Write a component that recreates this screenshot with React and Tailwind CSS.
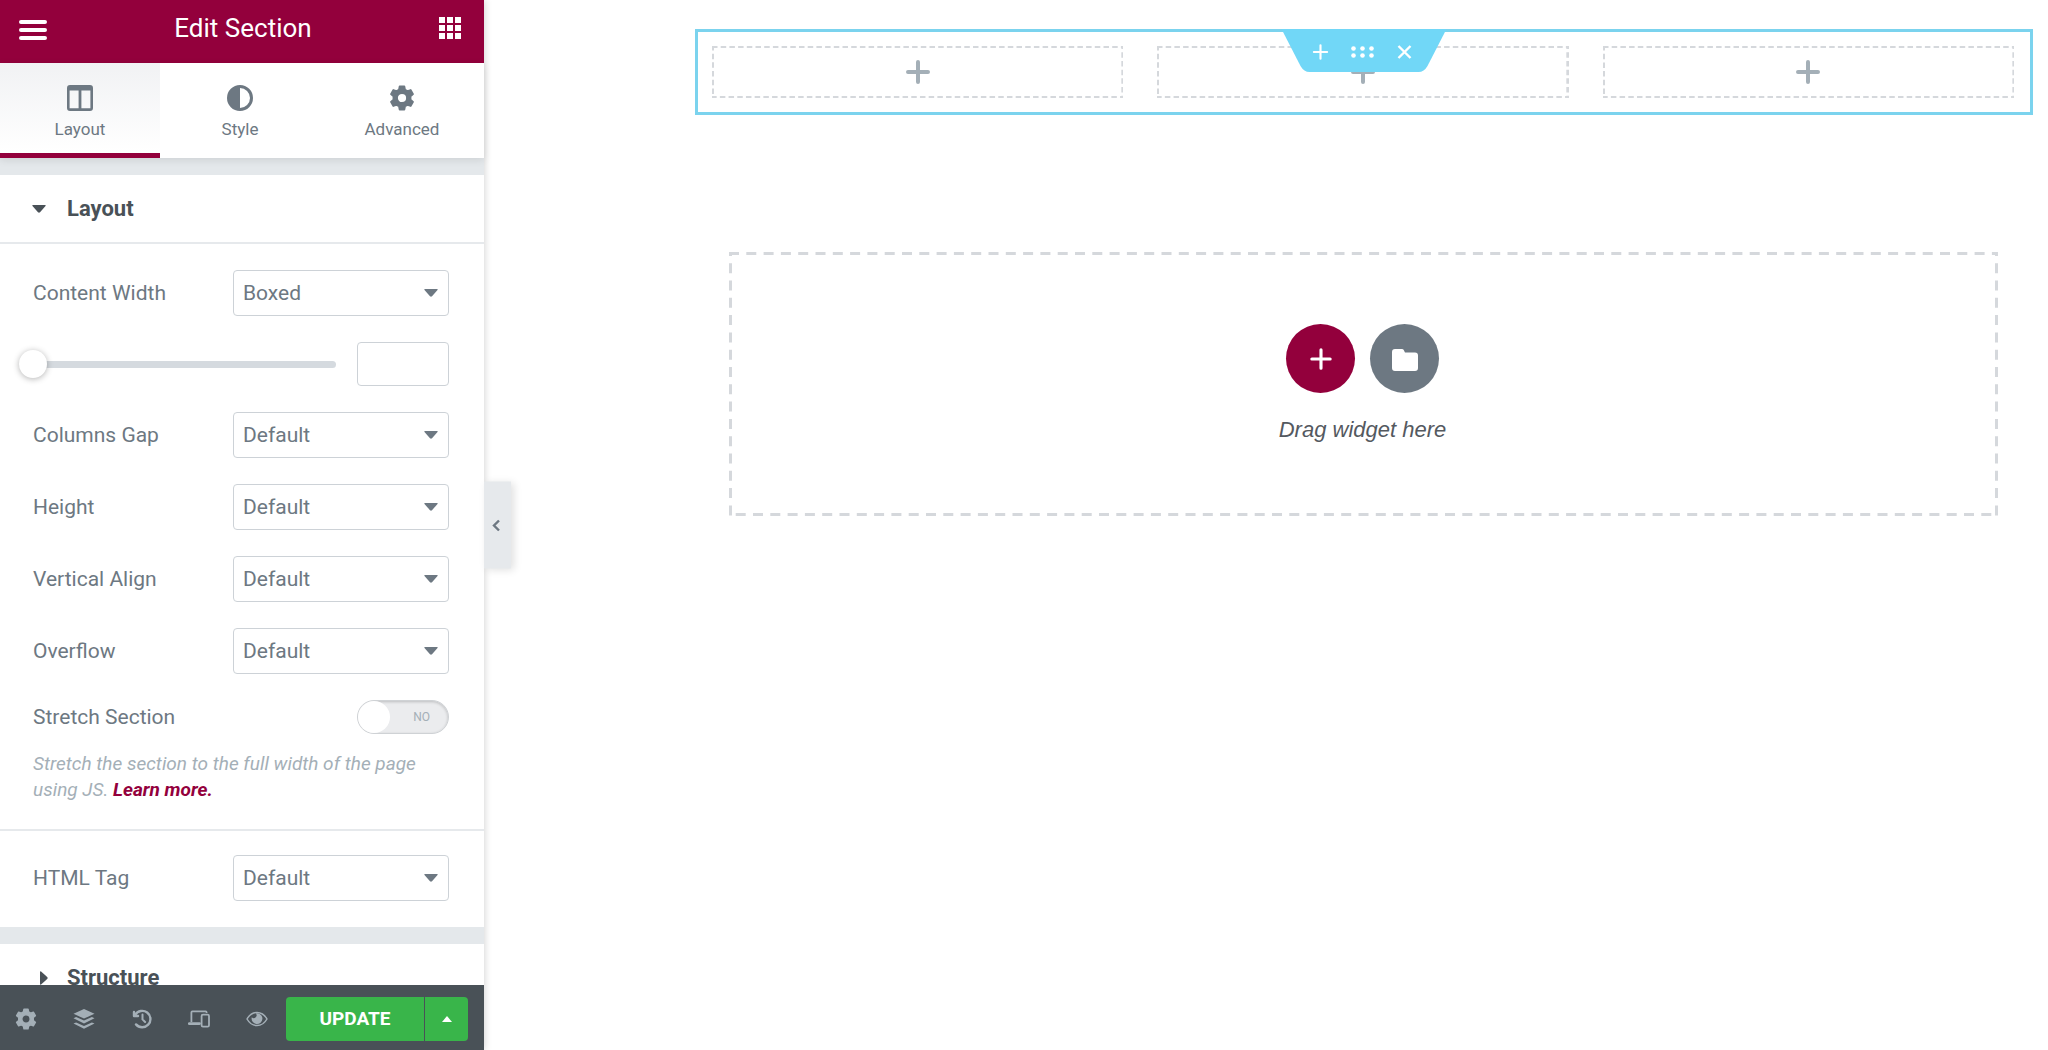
import { useState } from 'react';

const tabs = [
  { id: 'layout', label: 'Layout', icon: ColumnsIcon },
  { id: 'style', label: 'Style', icon: ContrastIcon },
  { id: 'advanced', label: 'Advanced', icon: GearIcon },
];

const selects = [
  { id: 'columns-gap', label: 'Columns Gap', options: ['Default', 'No Gap', 'Narrow', 'Extended', 'Wide'] },
  { id: 'height', label: 'Height', options: ['Default', 'Fit To Screen', 'Min Height'] },
  { id: 'vertical-align', label: 'Vertical Align', options: ['Default', 'Top', 'Middle', 'Bottom'] },
  { id: 'overflow', label: 'Overflow', options: ['Default', 'Hidden'] },
];

const tools = [
  { label: 'Settings', icon: GearIcon },
  { label: 'Navigator', icon: LayersIcon },
  { label: 'History', icon: HistoryIcon },
  { label: 'Responsive Mode', icon: DevicesIcon },
  { label: 'Preview Changes', icon: EyeIcon },
];

function ColumnsIcon({ className }) {
  return (
    <svg viewBox="0 0 26 26" className={className} fill="currentColor" fillRule="evenodd" aria-hidden="true">
      <path d="M3 0h20a3 3 0 0 1 3 3v20a3 3 0 0 1-3 3H3a3 3 0 0 1-3-3V3a3 3 0 0 1 3-3zM2.6 5.6v17.6h9V5.6zM14.4 5.6v17.6h9V5.6z" />
    </svg>
  );
}

function ContrastIcon({ className }) {
  return (
    <svg viewBox="0 0 26 26" className={className} fill="currentColor" fillRule="evenodd" aria-hidden="true">
      <path d="M13 0a13 13 0 1 1 0 26a13 13 0 0 1 0-26zM13 3v20a10 10 0 0 0 0-20z" />
    </svg>
  );
}

function GearIcon({ className }) {
  return (
    <svg viewBox="0 0 24 24" className={className} fill="currentColor" fillRule="evenodd" aria-hidden="true">
      <path
        stroke="currentColor"
        strokeWidth="1.6"
        strokeLinejoin="round"
        d="M9.8 1.3h4.4l.6 3 2.3 1.3 2.9-1 2.2 3.8-2.3 2v3.2l2.3 2-2.2 3.8-2.9-1-2.3 1.3-.6 3H9.8l-.6-3-2.3-1.3-2.9 1-2.2-3.8 2.3-2v-3.2l-2.3-2L4 4.6l2.9 1 2.3-1.3zM12 7.4a4.6 4.6 0 1 0 0 9.2a4.6 4.6 0 0 0 0-9.2z"
      />
    </svg>
  );
}

function LayersIcon({ className }) {
  return (
    <svg viewBox="0 0 22 22" className={className} fill="currentColor" aria-hidden="true">
      <path d="M11 1l10.5 4.8L11 10.6.5 5.8z" />
      <path d="M.5 10.2l2.6-1.2L11 12.600 18.9 9l2.600 1.200L11 15.4z" />
      <path d="M.5 15.6l2.6-1.2L11 18l7.900-3.600 2.600 1.200L11 20.8z" />
    </svg>
  );
}

function HistoryIcon({ className }) {
  return (
    <svg viewBox="0 0 22 22" className={className} fill="none" stroke="currentColor" strokeWidth="2.4" strokeLinecap="round" strokeLinejoin="round" aria-hidden="true">
      <path d="M4.2 6.8a8.200 8.200 0 1 1 .8 9.600" />
      <path d="M11.500 6.600v4.800l2.600 2.600" strokeWidth="2" />
      <path d="M3 4v4h4" />
    </svg>
  );
}

function DevicesIcon({ className }) {
  return (
    <svg viewBox="0 0 22 22" className={className} fill="none" stroke="currentColor" strokeWidth="1.8" strokeLinejoin="round" aria-hidden="true">
      <path d="M3.400 14V4.400a1 1 0 0 1 1-1h13.200a1 1 0 0 1 1 1V5" />
      <path d="M1.200 15.600h10.400" strokeWidth="2.600" strokeLinecap="round" />
      <rect x="13.600" y="6.600" width="7.400" height="12" rx="1.400" />
    </svg>
  );
}

function EyeIcon({ className }) {
  return (
    <svg viewBox="0 0 22 22" className={className} aria-hidden="true">
      <path fill="none" stroke="currentColor" strokeWidth="1.5" strokeLinejoin="round" d="M1 11c2.4-4.2 6-6.600 10-6.600S18.600 6.800 21 11c-2.400 4.200-6 6.600-10 6.600S3.400 15.200 1 11z" />
      <path fill="currentColor" d="M11 5.200a5.400 5.400 0 1 1-5.200 4A2.600 2.600 0 0 0 9.800 5.400z" />
    </svg>
  );
}

function PlusIcon({ className, strokeWidth }) {
  return (
    <svg viewBox="0 0 24 24" className={className} fill="none" stroke="currentColor" strokeWidth={strokeWidth} strokeLinecap="round" aria-hidden="true">
      <path d="M12 2v20M2 12h20" />
    </svg>
  );
}

// Dashed outline; the outer half of the stroke is clipped by the svg
function Dashes({ width, pattern }) {
  return (
    <svg className="pointer-events-none absolute inset-0 size-full" fill="none" stroke="#d5d8dc" aria-hidden="true">
      <rect width="100%" height="100%" strokeWidth={width * 2} strokeDasharray={pattern} />
    </svg>
  );
}

function Select({ id, label, options }) {
  return (
    <div className="flex items-center justify-between">
      <label htmlFor={id}>{label}</label>
      <div className="relative w-[216px]">
        <select id={id} className="h-[46px] w-full appearance-none rounded-[4px] border border-[#cdd2d7] bg-white pl-[9px] pr-8">
          {options.map((option) => (
            <option key={option}>{option}</option>
          ))}
        </select>
        <svg viewBox="0 0 14 8" className="pointer-events-none absolute right-[11px] top-[19px] h-2 w-3.5" fill="currentColor" aria-hidden="true">
          <path d="M1 0h12q1.2.2.5 1.1L8 7.2q-1 .9-2 0L.5 1.1Q-.2.2 1 0z" />
        </svg>
      </div>
    </div>
  );
}

function Panel() {
  const [activeTab, setActiveTab] = useState('layout');
  const [width, setWidth] = useState('');
  const [stretch, setStretch] = useState(false);

  return (
    <aside className="relative z-10 flex w-[484px] shrink-0 flex-col bg-[#e4e8eb] text-[21px] leading-[26px] text-[#6d7882] shadow-[0_0_8px_rgba(0,0,0,0.2)]">
      {/* Header */}
      <header className="flex h-[63px] shrink-0 items-center justify-between bg-[#93003c] px-[19px] pb-2 text-white">
        <button aria-label="Menu" className="pt-1">
          <svg viewBox="0 0 28 20" className="h-5 w-7" stroke="currentColor" strokeWidth="4" strokeLinecap="round" aria-hidden="true">
            <path d="M2 2h24M2 10h24M2 18h24" />
          </svg>
        </button>
        <h1 className="text-[26px]">Edit Section</h1>
        <button aria-label="Widgets" className="pr-1">
          <svg viewBox="0 0 22 22" className="size-[22px]" fill="currentColor" aria-hidden="true">
            <path d="M0 0h6v6H0zM8 0h6v6H8zM16 0h6v6h-6zM0 8h6v6H0zM8 8h6v6H8zM16 8h6v6h-6zM0 16h6v6H0zM8 16h6v6H8zM16 16h6v6h-6z" />
          </svg>
        </button>
      </header>

      {/* Tabs */}
      <nav className="relative z-10 grid h-[95px] shrink-0 grid-cols-[160px_160px_1fr] bg-white shadow-[0_2px_8px_rgba(0,0,0,0.1)]">
        {tabs.map(({ id, label, icon: Icon }) => (
          <button
            key={id}
            onClick={() => setActiveTab(id)}
            className={`flex flex-col items-center gap-[7px] border-b-[5px] pt-[22px] text-[17px] leading-[22px] ${
              activeTab === id ? 'border-[#93003c] bg-linear-to-b from-[#f1f2f4] to-white' : 'border-transparent'
            }`}
          >
            <Icon className="size-[26px]" />
            {label}
          </button>
        ))}
      </nav>

      {/* Controls */}
      <div className="min-h-0 flex-1 overflow-hidden pt-[17px]">
        <section className="bg-white">
          <button className="flex h-[69px] w-full items-center gap-[21px] border-b-2 border-[#e6e9ec] pl-8 text-[22px] font-bold text-[#495157]">
            <svg viewBox="0 0 14 8" className="h-2 w-3.5" fill="currentColor" aria-hidden="true">
              <path d="M1 0h12q1.2.2.5 1.1L8 7.2q-1 .9-2 0L.5 1.1Q-.2.2 1 0z" />
            </svg>
            Layout
          </button>

          <div className="flex flex-col gap-[26px] py-[26px] pl-[33px] pr-[35px]">
            <Select id="content-width" label="Content Width" options={['Boxed', 'Full Width']} />
            <div className="flex h-11 items-center justify-between">
              <input
                type="range"
                aria-label="Width"
                min="0"
                max="1600"
                value={width || 0}
                onChange={(e) => setWidth(e.target.value)}
                className="-ml-3.5 h-7 w-[317px] cursor-pointer appearance-none bg-transparent [&::-webkit-slider-runnable-track]:h-[7px] [&::-webkit-slider-runnable-track]:rounded-full [&::-webkit-slider-runnable-track]:bg-[#d5dadf] [&::-webkit-slider-thumb]:-mt-[11px] [&::-webkit-slider-thumb]:size-7 [&::-webkit-slider-thumb]:appearance-none [&::-webkit-slider-thumb]:rounded-full [&::-webkit-slider-thumb]:bg-white [&::-webkit-slider-thumb]:shadow-[0_1px_6px_rgba(0,0,0,0.3)]"
              />
              <input
                type="text"
                aria-label="Width in pixels"
                value={width}
                onChange={(e) => setWidth(e.target.value)}
                className="h-11 w-[92px] rounded-[4px] border border-[#cdd2d7] px-2"
              />
            </div>
            {selects.map((select) => (
              <Select key={select.id} {...select} />
            ))}
            <div>
              <div className="flex items-center justify-between">
                <label htmlFor="stretch">Stretch Section</label>
                <div className="relative h-[34px] w-[92px]">
                  <input
                    id="stretch"
                    type="checkbox"
                    role="switch"
                    checked={stretch}
                    onChange={(e) => setStretch(e.target.checked)}
                    className="peer size-full appearance-none rounded-full border border-[#cfd2d5] bg-[#ebecee] shadow-[inset_0_1px_3px_rgba(0,0,0,0.2)] checked:bg-[#93003c]"
                  />
                  <span className="pointer-events-none absolute left-px top-px size-8 rounded-full bg-white peer-checked:left-[59px]" />
                  <span className="pointer-events-none absolute inset-y-0 right-[19px] flex items-center text-xs text-[#a4afb7] peer-checked:right-[50px] peer-checked:text-white">
                    {stretch ? 'YES' : 'NO'}
                  </span>
                </div>
              </div>
              <p className="mt-[17px] text-[19px] italic text-[#a4afb7]">
                Stretch the section to the full width of the page using JS.{' '}
                <a href="#" className="font-bold text-[#93003c]">Learn more.</a>
              </p>
            </div>
          </div>

          <div className="border-t-2 border-[#e6e9ec] pb-[26px] pl-[33px] pr-[35px] pt-6">
            <Select id="html-tag" label="HTML Tag" options={['Default', 'div', 'header', 'footer', 'main', 'article', 'section']} />
          </div>
        </section>

        <section className="mt-[17px] bg-white">
          <button className="flex h-[67px] w-full items-center gap-[19px] pl-10 text-[22px] font-bold text-[#495157]">
            <svg viewBox="0 0 8 14" className="h-3.5 w-2" fill="currentColor" aria-hidden="true">
              <path d="M0 1v12q.2 1.2 1.1.5L7.2 8q.9-1 0-2L1.1.5Q.2-.2 0 1z" />
            </svg>
            Structure
          </button>
        </section>
      </div>

      {/* Footer */}
      <footer className="flex h-[65px] shrink-0 items-center bg-[#495157] pr-4 pt-0.5 text-[#a4afb7]">
        <div className="flex flex-1 items-center justify-between pl-[15px] pr-[18px]">
          {tools.map(({ label, icon: Icon }) => (
            <button key={label} aria-label={label}>
              <Icon className="size-[22px]" />
            </button>
          ))}
        </div>
        <div className="flex h-11 gap-px text-white">
          <button className="w-[138px] rounded-l-[4px] bg-[#39b54a] text-[19px] font-bold">UPDATE</button>
          <button aria-label="Save Options" className="flex w-[43px] items-center justify-center rounded-r-[4px] bg-[#39b54a]">
            <svg viewBox="0 0 10 6" className="h-1.5 w-2.5" fill="currentColor" aria-hidden="true">
              <path d="M5 0l5 6H0z" />
            </svg>
          </button>
        </div>
      </footer>

      <button
        aria-label="Hide Panel"
        className="absolute left-full top-1/2 flex h-[87px] w-[27px] -translate-y-1/2 items-center bg-[#e6e9ec] pl-2 shadow-[3px_1px_8px_rgba(0,0,0,0.12)]"
      >
        <svg viewBox="0 0 8 12" className="h-3 w-2" fill="none" stroke="currentColor" strokeWidth="2.4" aria-hidden="true">
          <path d="M7 1L2 6l5 5" />
        </svg>
      </button>
    </aside>
  );
}

function Canvas() {
  return (
    <main className="min-w-0 flex-1 bg-white pl-[211px] pr-[15px] pt-[29px]">
      {/* Selected section */}
      <section className="relative border-[3px] border-[#7bd3ee] pb-3.5 pl-3.5 pr-4 pt-3.5">
        <div className="grid grid-cols-3 gap-[34px]">
          {[1, 2, 3].map((column) => (
            <button
              key={column}
              aria-label={`Add to column ${column}`}
              className="relative flex h-[52px] items-center justify-center text-[#a4afb7]"
            >
              <Dashes width={2} pattern="5.5 3.2" />
              <PlusIcon className="size-6" strokeWidth="4" />
            </button>
          ))}
        </div>
        <div className="absolute -top-[3px] left-1/2 h-[43px] w-[165px] -translate-x-1/2 text-white">
          <svg viewBox="0 0 165 43" className="absolute inset-0 size-full" fill="#71d7f7" aria-hidden="true">
            <path d="M0 0h165L146 37q-3.5 6-9 6H28q-5.5 0-9-6z" />
          </svg>
          <div className="relative flex h-full items-center justify-between pl-[31px] pr-[34px] pt-0.5">
            <button aria-label="Add Section">
              <PlusIcon className="size-4" strokeWidth="3.2" />
            </button>
            <button aria-label="Edit Section">
              <svg viewBox="0 0 24 12" className="h-3 w-6" fill="currentColor" aria-hidden="true">
                <circle cx="3" cy="2.500" r="2.300" />
                <circle cx="12" cy="2.500" r="2.300" />
                <circle cx="21" cy="2.500" r="2.300" />
                <circle cx="3" cy="9.500" r="2.300" />
                <circle cx="12" cy="9.500" r="2.300" />
                <circle cx="21" cy="9.500" r="2.300" />
              </svg>
            </button>
            <button aria-label="Delete Section">
              <svg viewBox="0 0 16 16" className="size-4" fill="none" stroke="currentColor" strokeWidth="2.4" aria-hidden="true">
                <path d="M2 2l12 12M14 2L2 14" />
              </svg>
            </button>
          </div>
        </div>
      </section>

      {/* Drop zone */}
      <section className="relative ml-[34px] mr-[35px] mt-[137px] flex h-[264px] flex-col items-center pr-0.5 pt-[72px]">
        <Dashes width={3} pattern="10 7.3" />
        <div className="flex gap-[15px] text-white">
          <button aria-label="Add New Section" className="flex size-[69px] items-center justify-center rounded-full bg-[#93003c]">
            <PlusIcon className="size-[22px]" strokeWidth="3.4" />
          </button>
          <button aria-label="Add Template" className="flex size-[69px] items-center justify-center rounded-full bg-[#6d7882]">
            <svg viewBox="0 0 26 22" className="mt-0.5 h-[22px] w-[26px]" fill="currentColor" aria-hidden="true">
              <path d="M3 0h7q1 0 1.600.8L13 3.500h10a3 3 0 0 1 3 3V19a3 3 0 0 1-3 3H3a3 3 0 0 1-3-3V3a3 3 0 0 1 3-3z" />
            </svg>
          </button>
        </div>
        <p className="mt-6 font-['Liberation_Sans',Arial,sans-serif] text-[22px] italic leading-[26px] text-[#54595f]">Drag widget here</p>
      </section>
    </main>
  );
}

export default function App() {
  return (
    <div className="flex h-screen overflow-hidden bg-white font-[Roboto,sans-serif]">
      <Panel />
      <Canvas />
    </div>
  );
}
